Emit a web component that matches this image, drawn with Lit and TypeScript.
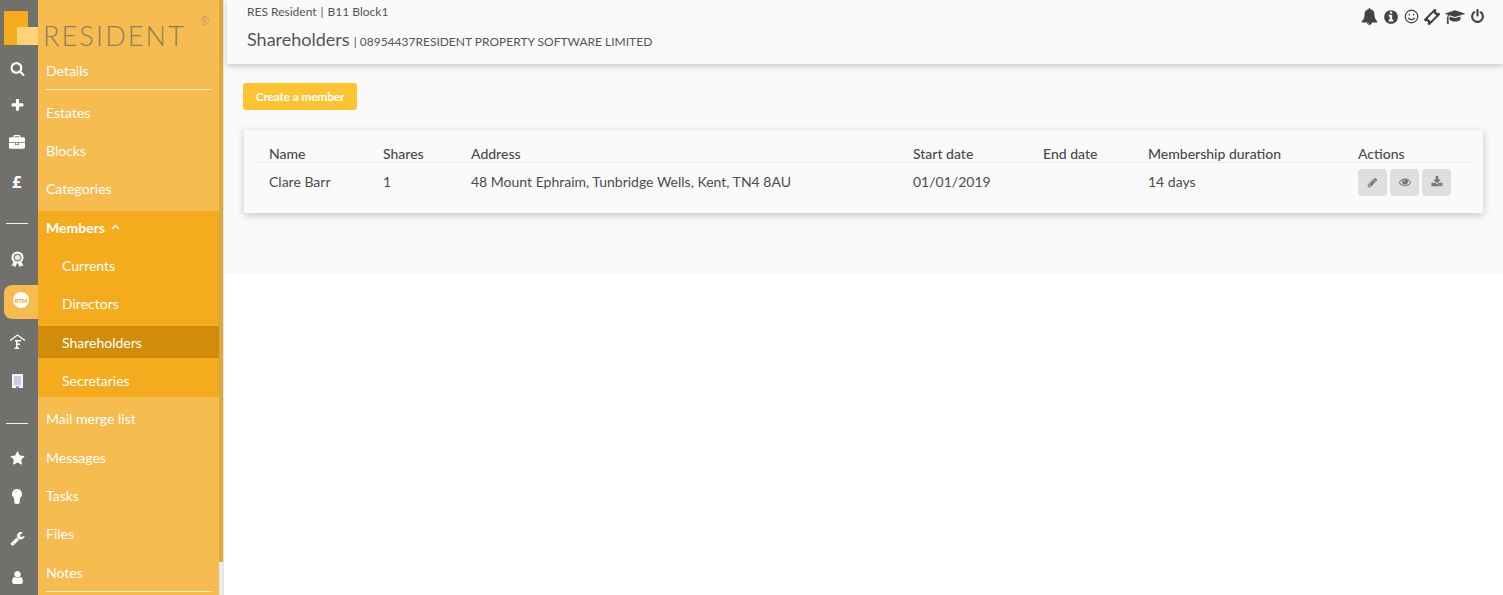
import { LitElement, html, css, svg } from "lit";
import { customElement } from "lit/decorators.js";

const P: Record<string, string> = {
  search: "M1216 832q0-185-131.500-316.500t-316.500-131.500-316.500 131.500-131.500 316.500 131.500 316.500 316.500 131.500 316.500-131.500 131.500-316.500zm512 832q0 52-38 90t-90 38q-54 0-90-38l-343-342q-179 124-399 124-143 0-273.500-55.500t-225-150-150-225-55.500-273.500 55.500-273.500 150-225 225-150 273.500-55.500 273.500 55.500 225 150 150 225 55.500 273.500q0 220-124 399l343 343q37 37 37 90z",
  plus: "M1600 736v192q0 40-28 68t-68 28h-416v416q0 40-28 68t-68 28h-192q-40 0-68-28t-28-68v-416h-416q-40 0-68-28t-28-68v-192q0-40 28-68t68-28h416v-416q0-40 28-68t68-28h192q40 0 68 28t28 68v416h416q40 0 68 28t28 68z",
  briefcase: "M640 256h512v-128h-512v128zm1152 640v480q0 66-47 113t-113 47h-1472q-66 0-113-47t-47-113v-480h672v160q0 26 19 45t45 19h320q26 0 45-19t19-45v-160h672zm-768 0v128h-256v-128h256zm768-480v384h-1792v-384q0-66 47-113t113-47h352v-160q0-40 28-68t68-28h576q40 0 68 28t28 68v160h352q66 0 113 47t47 113z",
  star: "M1728 647q0 22-26 48l-363 354 86 500q1 7 1 20 0 21-10.500 35.500t-30.500 14.500q-19 0-40-12l-449-236-449 236q-22 12-40 12-21 0-31.500-14.500t-10.500-35.500q0-6 2-20l86-500-364-354q-25-27-25-48 0-37 56-46l502-73 225-455q19-41 49-41t49 41l225 455 502 73q56 9 56 46z",
  bell: "M912 1696q0-16-16-16-59 0-101.500-42.500t-42.500-101.500q0-16-16-16t-16 16q0 73 51.500 124.500t124.500 51.500q16 0 16-16zm816-288q0 52-38 90t-90 38h-448q0 106-75 181t-181 75-181-75-75-181h-448q-52 0-90-38t-38-90q50-42 91-88t85-119.500 74.500-158.500 50-206 19.500-260q0-152 117-282.500t307-158.500q-8-19-8-39 0-40 28-68t68-28 68 28 28 68q0 20-8 39 190 28 307 158.500t117 282.500q0 139 19.500 260t50 206 74.500 158.500 85 119.500 91 88z",
  info: "M1152 1376v-160q0-14-9-23t-23-9h-96v-512q0-14-9-23t-23-9h-320q-14 0-23 9t-9 23v160q0 14 9 23t23 9h96v320h-96q-14 0-23 9t-9 23v160q0 14 9 23t23 9h448q14 0 23-9t9-23zm-128-896v-160q0-14-9-23t-23-9h-192q-14 0-23 9t-9 23v160q0 14 9 23t23 9h192q14 0 23-9t9-23zm640 416q0 209-103 385.500t-279.500 279.500-385.500 103-385.500-103-279.500-279.500-103-385.500 103-385.500 279.500-279.500 385.500-103 385.500 103 279.500 279.500 103 385.500z",
  power: "M1664 896q0 156-61 298t-164 245-245 164-298 61-298-61-245-164-164-245-61-298q0-182 80.500-343t226.500-270q43-32 95.500-25t83.500 50q32 42 24.500 94.500t-49.500 84.500q-98 74-151.500 181t-53.500 228q0 104 40.500 198.500t109.500 163.500 163.500 109.500 198.500 40.500 198.500-40.500 163.500-109.500 109.500-163.500 40.500-198.500q0-121-53.500-228t-151.500-181q-42-32-49.500-84.500t24.500-94.500q31-43 84-50t95 25q146 109 226.500 270t80.500 343zm-640-768v640q0 52-38 90t-90 38-90-38-38-90v-640q0-52 38-90t90-38 90 38 38 90z",
  pencil: "M491 1536l91-91-235-235-91 91v107h128v128h107zm523-928q0-22-22-22-10 0-17 7l-542 542q-7 7-7 17 0 22 22 22 10 0 17-7l542-542q7-7 7-17zm-54-192l416 416-832 832h-416v-416zm683 96q0 53-37 90l-166 166-416-416 166-165q36-38 90-38 53 0 91 38l235 234q37 39 37 91z",
  eye: "M1664 960q-152-236-381-353 61 104 61 225 0 185-131.500 316.500t-316.500 131.500-316.500-131.500-131.500-316.500q0-121 61-225-229 117-381 353 133 205 333.500 326.500t434.500 121.500 434.500-121.500 333.500-326.500zm-720-384q0-20-14-34t-34-14q-125 0-214.500 89.500t-89.500 214.500q0 20 14 34t34 14 34-14 14-34q0-86 61-147t147-61q20 0 34-14t14-34zm848 384q0 34-20 69-140 230-376.500 368.500t-499.500 138.500-499.500-139-376.500-368q-20-35-20-69t20-69q140-229 376.500-368t499.500-139 499.500 139 376.500 368q20 35 20 69z",
  download: "M1344 1344q0-26-19-45t-45-19-45 19-19 45 19 45 45 19 45-19 19-45zm256 0q0-26-19-45t-45-19-45 19-19 45 19 45 45 19 45-19 19-45zm128-224v320q0 40-28 68t-68 28h-1472q-40 0-68-28t-28-68v-320q0-40 28-68t68-28h465l135 136q58 56 136 56t136-56l136-136h464q40 0 68 28t28 68zm-325-569q17 41-14 70l-448 448q-18 19-45 19t-45-19l-448-448q-31-29-14-70 17-39 59-39h256v-448q0-26 19-45t45-19h256q26 0 45 19t19 45v448h256q42 0 59 39z",
  wrench: "M448 1472q0-26-19-45t-45-19-45 19-19 45 19 45 45 19 45-19 19-45zm644-420l-682 682q-37 37-90 37-52 0-91-37l-106-108q-38-36-38-90 0-53 38-91l681-681q39 98 114.500 173.500t173.500 114.500zm634-435q0 39-23 106-47 134-164.500 217.500t-258.500 83.500q-185 0-316.500-131.500t-131.500-316.500 131.500-316.500 316.500-131.500q58 0 121.500 16.500t107.500 46.500q16 11 16 28t-16 28l-293 169v224l193 107q5-3 79-48.500t135.500-81 70.500-35.500q15 0 23.500 10t8.500 25z",
  user: "M1536 1399q0 109-62.500 187t-150.500 78h-854q-88 0-150.500-78t-62.500-187q0-85 8.500-160.500t31.500-152 58.500-131 94-89 134.500-34.500q131 128 313 128t313-128q76 0 134.500 34.500t94 89 58.500 131 31.500 152 8.500 160.500zm-256-887q0 159-112.500 271.500t-271.500 112.500-271.500-112.500-112.500-271.500 112.500-271.500 271.500-112.500 271.500 112.500 112.500 271.500z",
};
const CAP = "M1774 836l18 316q4 69-82 128t-235 93.500-323 34.500-323-34.500-235-93.500-82-128l18-316 574 181q22 7 48 7t48-7zm530-324q0 23-22 31l-1120 352q-4 1-10 1t-10-1l-652-206q-43 34-71 111.500t-34 178.500q63 36 63 109 0 69-58 107l58 433q2 14-8 25-9 11-24 11h-192q-15 0-24-11-10-11-8-25l58-433q-58-38-58-107 0-73 65-111 11-207 98-330l-333-104q-22-8-22-31t22-31l1120-352q4-1 10-1t10 1l1120 352q22 8 22 31z";

const fa = (n: string, s: number) =>
  html`<svg width=${s} height=${s} viewBox="0 0 1792 1792" fill="currentColor"><path d=${P[n]}></path></svg>`;

const award = html`<svg width="15" height="17" viewBox="0 0 15 17">
  <path d="M4 10l-2.500 5 2.500-.5 1 2 2-4zM11 10l2.500 5-2.500-.5-1 2-2-4z" fill="#fff"></path>
  <circle cx="7.500" cy="6.500" r="6" fill="#fff"></circle>
  <circle cx="7.500" cy="6.500" r="4" fill="#8d8c88"></circle>
  <circle cx="7.500" cy="6.500" r="2.500" fill="#e8e8f2"></circle>
</svg>`;
const house = html`<svg width="15" height="15" viewBox="0 0 15 15">
  <path d="M0 6.500L7.500 1 15 6.500" fill="none" stroke="#fff" stroke-width="1.400"></path>
  <path d="M5 6h6v1.500H7.500v2h2.500V11H7.500v2.500H9V15H4.500v-1.500H6V7.500H5z" fill="#fff"></path>
</svg>`;
const building = html`<svg width="11" height="14" viewBox="0 0 11 14">
  <rect width="11" height="14" fill="#f3f3fb"></rect>
  <rect x="2" y="2" width="7" height="9" fill="#c9cde0"></rect>
  <rect x="4" y="12" width="3" height="2" fill="#7f9ad8"></rect>
</svg>`;
const bulb = html`<svg width="10" height="15" viewBox="0 0 10 15">
  <path d="M5 0a5 5 0 0 1 3 9l-.5 5.500L5 15l-2.500-.5L2 9A5 5 0 0 1 5 0z" fill="#fff"></path>
  <path d="M2 3.500A3.500 3.500 0 0 1 5 1.500v1.500a2 2 0 0 0-1.500 1z" fill="#f3d9a0"></path>
</svg>`;

const rows = [
  { n: "Name", v: "Clare Barr" },
  { n: "Shares", v: "1" },
  { n: "Address", v: "48 Mount Ephraim, Tunbridge Wells, Kent, TN4 8AU" },
  { n: "Start date", v: "01/01/2019" },
  { n: "End date", v: "" },
  { n: "Membership duration", v: "14 days" },
];

@customElement("app-root")
export class AppRoot extends LitElement {
  static styles = css`
    :host {
      display: grid;
      grid-template-columns: 38px 181px 5px 1fr;
      width: 1503px;
      height: 595px;
      overflow: hidden;
      position: relative;
      background: #fff;
      font-family: Lato, "Liberation Sans", sans-serif;
      font-size: 14px;
      color: #4c4c4c;
    }
    .rail {
      background: #71706c;
      color: #fff;
      display: grid;
      grid-template-rows: 50px 36px 38px 38px 42px 38px 34px 43px 44px 36px 48px 22px 54px 30px 48px;
      height: 595px;
      overflow: hidden;
    }
    .ri { display: flex; align-items: center; justify-content: center; padding-right: 4px; }
    .gbp { font: bold 15px "DejaVu Sans", sans-serif; }
    .div::before { content: ""; width: 22px; height: 1px; background: #f2f2f0; }
    .active {
      align-self: end;
      height: 34px;
      margin-left: 4px;
      padding: 0 0 4px 0;
      box-sizing: border-box;
      background: #f6bc4f;
      border-radius: 8px 0 0 8px;
    }
    .rtm {
      width: 16px; height: 16px; border-radius: 50%; background: #fff; color: #f5ab1e;
      font-size: 6px; font-weight: 900; display: flex; align-items: center; justify-content: center;
    }
    .logo { position: absolute; left: 0; top: 0; width: 224px; height: 50px; }
    .sq1 { position: absolute; left: 4px; top: 11px; width: 24px; height: 34px; background: #f5ab1e; }
    .sq2 { position: absolute; left: 17px; top: 27px; width: 21px; height: 18px; background: #fdd27a; }
    .brand {
      position: absolute; left: 43px; top: 20px; font-size: 27px; line-height: 32px; font-weight: 300;
      letter-spacing: 2.15px; color: #8a7f66; white-space: nowrap;
    }
    .reg { position: absolute; left: 200px; top: 15px; font-size: 11px; line-height: 12px; font-weight: 300; color: #a08f68; }
    .menu {
      background: #f6bc4f;
      color: #fff;
      padding-top: 54px;
      height: 595px;
      box-sizing: border-box;
      display: flex;
      flex-direction: column;
      gap: 6.33px;
      overflow: hidden;
    }
    .it { height: 32px; flex: none; display: flex; align-items: center; padding-left: 8px; }
    .ruled { position: relative; margin-bottom: 4px; }
    .ruled::after {
      content: ""; position: absolute; left: 8px; width: 166px; top: 35px; height: 1px; background: #fdeccb;
    }
    .group { background: #f5ab1e; display: flex; flex-direction: column; gap: 6.33px; flex: none; }
    .group .it.sub { padding-left: 24px; }
    .mem { font-weight: 700; gap: 6px; }
    .cur { background: #d18d0a; }
    .sb { background: #ececec; display: flex; border-right: 1px solid #e4e4e4; }
    .sb i { display: block; width: 4px; height: 562px; background: #dfa83f; }
    .main { display: flex; flex-direction: column; height: 274px; background: #fafafa; }
    .head {
      margin-left: 3px;
      height: 64px;
      flex: none;
      box-sizing: border-box;
      padding: 0 20px;
      background: #fafafa;
      box-shadow: 0 2px 6px rgba(0, 0, 0, 0.22);
      display: flex;
      justify-content: space-between;
      color: #555;
    }
    .crumbs { font-size: 12px; line-height: 14px; padding-top: 5px; display: flex; gap: 4px; }
    .title { display: flex; align-items: baseline; gap: 4px; margin-top: 9px; font-size: 12px; }
    .title b { font-weight: 400; font-size: 18px; line-height: 22px; }
    .tools { display: flex; gap: 5px; align-items: center; height: 15px; padding-top: 9px; color: #444; margin-right: -2px; }
    .smile { width: 15px; height: 15px; }
    .body { padding: 19px 20px 0 22px; }
    .btn {
      display: flex; align-items: center; justify-content: center;
      width: 114px; height: 27px; background: #fec333; color: #fff; border-radius: 3px;
      font-size: 12px; font-weight: 700; margin-left: -3px; letter-spacing: -0.2px;
    }
    .card {
      margin: 20px 0 0 -2px;
      height: 83px;
      box-sizing: border-box;
      padding: 16px 12px 0;
      background: #fafafa;
      box-shadow: 0 2px 8px rgba(0, 0, 0, 0.22);
    }
    .tr {
      display: grid;
      grid-template-columns: 114px 88px 442px 130px 105px 210px 1fr;
      padding-left: 13px;
    }
    .th { height: 15px; line-height: 15px; font-weight: 700; padding-bottom: 0; border-bottom: 1px solid #ededed; }
    .tr.th { height: 15.500px; }
    .th span { color: #4a4a4a; font-weight: 500; }
    .td { padding-top: 6px; line-height: 25px; }
    .acts { display: flex; gap: 3px; }
    .ab {
      width: 29px; height: 27px; background: #dedfe0; border-radius: 4px; color: #777;
      display: flex; align-items: center; justify-content: center;
    }
  `;

  render() {
    const ticket = svg`<g transform="rotate(-45 8 8)"><path d="M0 4h16v2.500a1.500 1.500 0 0 0 0 3V12H0V9.500a1.500 1.500 0 0 0 0-3z" fill="#444"></path><rect x="4" y="6" width="8" height="4" fill="#fafafa"></rect></g>`;
    return html`
      <div class="rail">
        <span></span>
        <div class="ri">${fa("search", 15)}</div>
        <div class="ri">${fa("plus", 15)}</div>
        <div class="ri">${fa("briefcase", 16)}</div>
        <div class="ri gbp">£</div>
        <div class="ri div"></div>
        <div class="ri">${award}</div>
        <div class="ri active"><span class="rtm">RTM</span></div>
        <div class="ri">${house}</div>
        <div class="ri">${building}</div>
        <div class="ri div"></div>
        <div class="ri">${fa("star", 15)}</div>
        <div class="ri">${bulb}</div>
        <div class="ri">${fa("wrench", 15)}</div>
        <div class="ri">${fa("user", 15)}</div>
      </div>
      <nav class="menu">
        <div class="it ruled">Details</div>
        <div class="it">Estates</div>
        <div class="it">Blocks</div>
        <div class="it">Categories</div>
        <div class="group">
          <div class="it mem">Members
            <svg width="9" height="6" viewBox="0 0 9 6"><path d="M1 5l3.500-3.500L8 5" fill="none" stroke="#fff" stroke-width="1.400"></path></svg>
          </div>
          <div class="it sub">Currents</div>
          <div class="it sub">Directors</div>
          <div class="it sub cur">Shareholders</div>
          <div class="it sub">Secretaries</div>
        </div>
        <div class="it">Mail merge list</div>
        <div class="it">Messages</div>
        <div class="it">Tasks</div>
        <div class="it">Files</div>
        <div class="it ruled">Notes</div>
      </nav>
      <div class="sb"><i></i></div>
      <main class="main">
        <header class="head">
          <div>
            <div class="crumbs"><span>RES Resident</span><span>|</span><span>B11 Block1</span></div>
            <div class="title"><b>Shareholders</b><span>| 08954437RESIDENT PROPERTY SOFTWARE LIMITED</span></div>
          </div>
          <div class="tools">
            ${fa("bell", 17)} ${fa("info", 16)}
            <svg class="smile" viewBox="0 0 16 16" fill="none" stroke="#444" stroke-width="1.300">
              <circle cx="8" cy="8" r="6.700"></circle>
              <path d="M4.500 9.500c1.500 2.500 5.500 2.500 7 0"></path>
              <path d="M5.700 5v2M10.300 5v2"></path>
            </svg>
            <svg width="16" height="16" viewBox="0 0 16 16">${ticket}</svg>
            <svg width="20" height="16" viewBox="0 0 2304 1792" fill="currentColor"><path d=${CAP}></path></svg>
            ${fa("power", 15)}
          </div>
        </header>
        <div class="body">
          <div class="btn">Create a member</div>
          <section class="card">
            <div class="tr th">
              ${rows.map((r) => html`<span>${r.n}</span>`)}<span>Actions</span>
            </div>
            <div class="tr td">
              ${rows.map((r) => html`<span>${r.v}</span>`)}
              <div class="acts">
                <div class="ab">${fa("pencil", 11)}</div>
                <div class="ab">${fa("eye", 12)}</div>
                <div class="ab">${fa("download", 12)}</div>
              </div>
            </div>
          </section>
        </div>
      </main>
      <div class="logo">
        <div class="sq1"></div>
        <div class="sq2"></div>
        <span class="brand">RESIDENT</span>
        <span class="reg">®</span>
      </div>
    `;
  }
}
